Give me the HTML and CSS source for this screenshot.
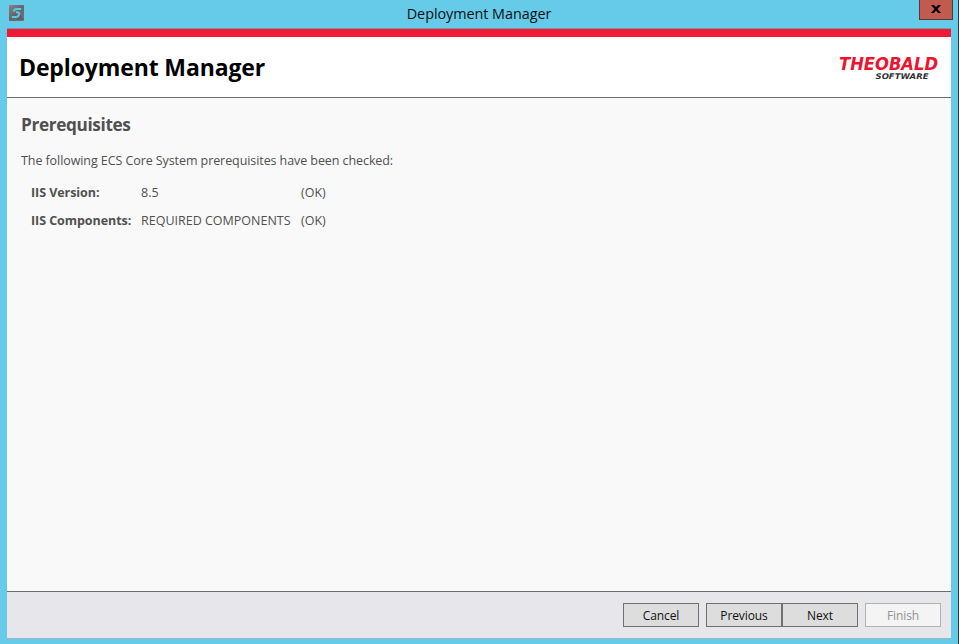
FILE: index.html
```html
<!DOCTYPE html>
<html lang="en">
<head>
<meta charset="utf-8">
<title>Deployment Manager</title>
<link rel="stylesheet" href="styles.css">
</head>
<body>
<div class="window">
  <header class="titlebar">
    <svg class="app-icon" width="15" height="16" viewBox="0 0 15 16">
      <defs><linearGradient id="tile" x1="0" y1="0" x2="1" y2="1"><stop offset="0" stop-color="#858585"/><stop offset=".5" stop-color="#626568"/><stop offset="1" stop-color="#777"/></linearGradient></defs>
      <rect width="15" height="16" rx="1" fill="url(#tile)"/>
      <path d="M6 7 10 8 15 14V15H8Z" fill="#4e5256" opacity=".55"/>
      <path d="M12.3 4H7.5Q5 4 4.8 6.6M6.8 7.4H9Q10.8 7.6 10 9.8Q9.3 12 7 12H2.8" fill="none" stroke="#62c4e4" stroke-width="2.1"/>
    </svg>
    <span class="window-title">Deployment Manager</span>
    <button class="close" aria-label="Close"><svg width="10" height="8" viewBox="0 0 10 8"><path d="M0 0H3L5 2.3 7 0H10L6.5 4 10 8H7L5 5.7 3 8H0L3.5 4Z" fill="#000"/></svg></button>
  </header>
  <main class="client">
    <div class="banner">
      <h1>Deployment Manager</h1>
      <svg class="logo" width="114" height="36" viewBox="0 0 114 36">
        <text class="logo-name" x="2" y="18.5" textLength="99" lengthAdjust="spacingAndGlyphs">THEOBALD</text>
        <text class="logo-sub" x="38.5" y="28" textLength="53" lengthAdjust="spacingAndGlyphs">SOFTWARE</text>
      </svg>
    </div>
    <section class="content">
      <h2>Prerequisites</h2>
      <p>The following ECS Core System prerequisites have been checked:</p>
      <dl class="checks">
        <dt>IIS Version:</dt><dd>8.5</dd><dd>(OK)</dd>
        <dt>IIS Components:</dt><dd>REQUIRED COMPONENTS</dd><dd>(OK)</dd>
      </dl>
    </section>
    <footer class="actions">
      <button>Cancel</button>
      <div class="pair"><button>Previous</button><button>Next</button></div>
      <button disabled>Finish</button>
    </footer>
  </main>
</div>
</body>
</html>
```
FILE: styles.css
```css
* { box-sizing: border-box; }
body { margin: 0; font-family: "Open Sans", "Noto Sans", sans-serif; }
.window { width: 959px; height: 644px; padding: 0 7px 5px; background: #66cae9; border-right: 1px solid #35353b; display: flex; flex-direction: column; }
.titlebar { height: 29px; flex: none; display: grid; grid-template-columns: 35px 1fr 35px; border-bottom: 1px solid #6d9eb0; }
.app-icon { margin: 5px 0 0 2px; }
.window-title { font-size: 14.4px; line-height: 27px; letter-spacing: -.05px; text-align: center; color: #111; }
.close { width: 34px; height: 20px; margin-left: 3px; padding: 0 0 2px; background: #c35a50; border: 1px solid #55383a; border-top: 0; display: flex; align-items: center; justify-content: center; }
.client { width: 944px; flex: 1; min-height: 0; display: flex; flex-direction: column; background: #f9f9f9; border-top: 8px solid #f01a34; border-bottom: 1px solid #9cb6c6; }
.banner { height: 61px; flex: none; background: #fff; border-bottom: 1px solid #6c6c6c; padding: 0 0 0 12px; display: flex; justify-content: space-between; align-items: center; }
h1 { margin: 0; font-size: 23px; line-height: 32px; font-weight: 700; letter-spacing: -.13px; color: #000; }
.logo { margin-top: 4px; overflow: visible; }
.logo-name { font: italic 700 17px "DejaVu Sans", sans-serif; fill: #ef132f; }
.logo-sub { font: italic 700 7.8px "DejaVu Sans", sans-serif; fill: #333; }
.content { flex: 1; padding: 15px 14px; color: #505050; font-size: 12.5px; }
h2 { margin: 0; font-size: 17.2px; line-height: 24px; letter-spacing: -.35px; }
p { margin: 15px 0 0; line-height: 18px; letter-spacing: -.08px; }
.checks { margin: 9px 0 0 10px; display: grid; grid-template-columns: 110px 160px auto; grid-auto-rows: 28px; line-height: 28px; white-space: nowrap; }
dt { font-weight: 700; letter-spacing: -.06px; }
dd { margin: 0; }
.actions { height: 47px; flex: none; background: #e6e6eb; border-top: 1px solid #6c6c6c; padding: 0 10px 0 0; display: flex; justify-content: flex-end; align-items: center; gap: 7px; }
.pair { display: flex; }
.actions button { width: 76px; height: 24px; padding: 1px 0 0; border: 1px solid #707070; background: #ddd; font: 12px/21px "Open Sans", sans-serif; letter-spacing: -.1px; color: #111; }
.actions button:disabled { background: #f4f4f4; border-color: #adb2b5; color: #929292; }
```
